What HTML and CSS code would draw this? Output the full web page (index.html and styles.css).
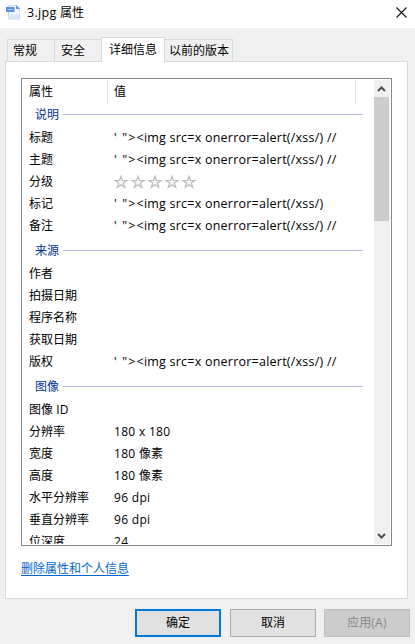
FILE: index.html
```html
<!DOCTYPE html>
<html lang="zh-CN">
<head>
<meta charset="utf-8">
<title>3.jpg 属性</title>
<link rel="stylesheet" href="styles.css">
</head>
<body>
<div class="dialog">
  <header class="titlebar">
    <svg class="file-icon" width="15" height="15" viewBox="0 0 15 15">
      <path d="M2.500 .5h8l3 3v10.500h-11z" fill="#f3f8fe" stroke="#c5d9f2"/>
      <path d="M10 0v4h4z" fill="#5f98e2"/>
      <path d="M3 12l3-3 2 2 2.500-3 2.500 3v2H3z" fill="#d5e6fa"/>
      <rect x="0" y="2" width="8.500" height="5" fill="#5b91de"/>
      <path d="M1.500 4.500h5.500" stroke="#a9c8f3"/>
    </svg>
    <span class="title"><span class="t">3.jpg </span>属性</span>
    <svg class="close" width="11" height="11" viewBox="0 0 11 11"><path d="M.5 .5l10 10M10.500 .5l-10 10" stroke="#111" stroke-width="1.100"/></svg>
  </header>
  <nav class="tabs">
    <div class="tab first">常规</div>
    <div class="tab second">安全</div>
    <div class="tab active">详细信息</div>
    <div class="tab last">以前的版本</div>
  </nav>
  <main class="panel">
    <div class="list">
      <div class="content">
        <div class="head"><span class="name">属性</span><span class="value">值</span></div>
        <div class="group"><span>说明</span></div>
        <div class="row"><span class="name">标题</span><span class="code"><span class="quote">' "&gt;</span>&lt;img src=x onerror=alert(/xss/) //</span></div>
        <div class="row"><span class="name">主题</span><span class="code"><span class="quote">' "&gt;</span>&lt;img src=x onerror=alert(/xss/) //</span></div>
        <div class="row"><span class="name">分级</span><svg class="stars" width="84" height="14" viewBox="0 0 84 14">
            <defs><path id="star" d="M7 1.300L8.400 5.500H13L9.300 8.100L10.800 12.500L7 9.800L3.200 12.500L4.700 8.100L1 5.500H5.600Z"/></defs>
            <g fill="#f8f8f8" stroke="#bdbdbd" stroke-width="1.200"><use href="#star"/><use href="#star" x="17"/><use href="#star" x="34"/><use href="#star" x="51"/><use href="#star" x="68"/></g>
          </svg></div>
        <div class="row"><span class="name">标记</span><span class="code"><span class="quote">' "&gt;</span>&lt;img src=x onerror=alert(/xss/)</span></div>
        <div class="row"><span class="name">备注</span><span class="code"><span class="quote">' "&gt;</span>&lt;img src=x onerror=alert(/xss/) //</span></div>
        <div class="group"><span>来源</span></div>
        <div class="row"><span class="name">作者</span></div>
        <div class="row"><span class="name">拍摄日期</span></div>
        <div class="row"><span class="name">程序名称</span></div>
        <div class="row"><span class="name">获取日期</span></div>
        <div class="row"><span class="name">版权</span><span class="code"><span class="quote">' "&gt;</span>&lt;img src=x onerror=alert(/xss/) //</span></div>
        <div class="group"><span>图像</span></div>
        <div class="row"><span class="name">图像 <span class="num">ID</span></span></div>
        <div class="row"><span class="name">分辨率</span><span class="num">180 x 180</span></div>
        <div class="row"><span class="name">宽度</span><span class="num">180 </span>像素</div>
        <div class="row"><span class="name">高度</span><span class="num">180 </span>像素</div>
        <div class="row"><span class="name">水平分辨率</span><span class="num">96 dpi</span></div>
        <div class="row"><span class="name">垂直分辨率</span><span class="num">96 dpi</span></div>
        <div class="row"><span class="name">位深度</span><span class="num">24</span></div>
      </div>
      <div class="scrollbar">
        <svg width="15" height="17" viewBox="0 0 15 17"><path d="M4 11l3.500-3.500L11 11" fill="none" stroke="#505050" stroke-width="2"/></svg>
        <div class="thumb"></div>
        <svg class="down" width="15" height="17" viewBox="0 0 15 17"><path d="M4 7l3.500 3.500L11 7" fill="none" stroke="#505050" stroke-width="2"/></svg>
      </div>
    </div>
    <a class="link">删除属性和个人信息</a>
  </main>
  <footer class="buttons">
    <div class="button primary">确定</div>
    <div class="button">取消</div>
    <div class="button disabled">应用<span class="num">(A)</span></div>
  </footer>
</div>
</body>
</html>
```
FILE: styles.css
```css
* { box-sizing: border-box; }
body { margin: 0; overflow: hidden; }
.dialog {
  width: 415px; height: 644px; background: #f0f0f0; color: #000;
  font: 12px/22px "Open Sans", "Noto Sans CJK SC", sans-serif;
  display: flex; flex-direction: column;
}
.titlebar { height: 28px; flex: none; background: #fff; display: flex; align-items: flex-start; padding: 5px 8px 0 6px; }
.title { margin: -3px 0 0 6px; flex: 1; white-space: pre; }
.t { font-size: 12.500px; letter-spacing: .3px; }
.close { margin: 2px 0 0; }
.tabs { height: 33px; flex: none; display: flex; align-items: flex-end; padding-left: 7px; }
.tab { height: 22px; border: 1px solid #d9d9d9; border-bottom: 0; padding-left: 5px; line-height: 22px; white-space: nowrap; }
.first { width: 47px; border-right: 0; }
.second { width: 47px; border-right: 0; padding-left: 6px; }
.active { width: 64px; height: 25px; margin-bottom: -1px; background: #fff; padding-left: 7px; line-height: 23px; z-index: 1; }
.last { width: 68px; border-left: 0; padding-left: 4px; }
.panel { width: 403px; height: 538px; flex: none; margin-left: 5px; padding: 16px 15px; background: #fff; border: 1px solid #d9d9d9; }
.list { width: 371px; height: 468px; border: 1px solid #828790; padding: 1px 1px 1px 0; display: flex; justify-content: space-between; }
.content { width: 341px; height: 464px; overflow: hidden; }
.head { height: 24px; width: 334px; margin-bottom: -3px; border-right: 1px solid #e5e5e5; display: flex; padding-left: 7px; line-height: 24px; }
.head .name { width: 79px; border-right: 1px solid #e5e5e5; margin-right: 6px; }
.group { height: 26px; display: flex; align-items: center; padding-left: 13px; color: #003399; line-height: 26px; }
.group span { padding-top: 1px; }
.group::after { content: ""; height: 1px; flex: 1; margin: 1px 0 0 4px; background: #b0bfe1; }
.row { height: 22px; display: flex; padding-left: 7px; white-space: pre; }
.row .name { width: 85px; flex: none; }
.code { font-size: 12.500px; letter-spacing: .23px; }
.quote { letter-spacing: 1.1px; }
.num { white-space: pre; letter-spacing: .3px; }
.stars { margin-top: 4px; }
.scrollbar { width: 16px; height: 464px; background: #f0f0f0; display: flex; flex-direction: column; }
.thumb { width: 15px; height: 124px; background: #cdcdcd; }
.down { margin-top: auto; }
.scrollbar svg { flex: none; }
.link { display: block; width: 108px; height: 18px; margin-top: 12px; line-height: 21px; color: #0066cc; text-decoration: underline; text-underline-offset: 2px; white-space: nowrap; }
.buttons { display: flex; gap: 9px; padding: 10px 0 0 135px; }
.button { width: 86px; height: 28px; border: 1px solid #adadad; background: #e1e1e1; text-align: center; line-height: 26px; }
.primary { border: 2px solid #0078d7; line-height: 24px; }
.disabled { margin-left: -1px; background: #ccc; border-color: #bfbfbf; color: #888; }
```
